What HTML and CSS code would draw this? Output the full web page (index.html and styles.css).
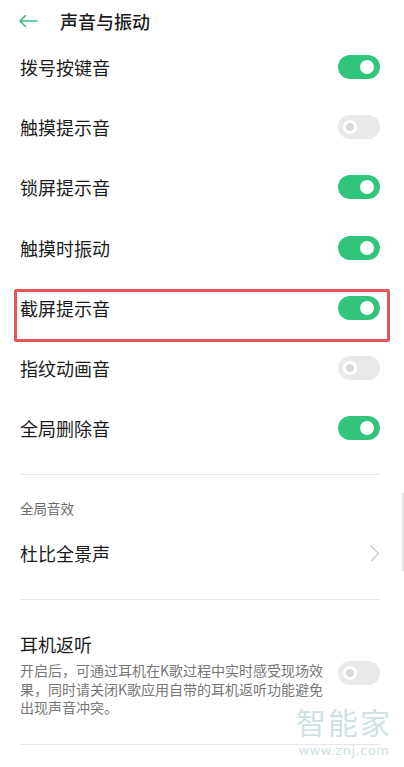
FILE: index.html
```html
<!DOCTYPE html>
<html lang="zh-CN">
<head>
  <meta charset="UTF-8" />
  <meta name="viewport" content="width=device-width, initial-scale=1.0"/>
  <title>声音与振动</title>
  <link rel="stylesheet" href="styles.css">
</head>
<body>
  <div class="page">
    <div class="header">
      <svg class="back" width="20" height="14" viewBox="0 0 20 14">
        <path d="M19 7H2M7.5 1.5L2 7l5.5 5.5" fill="none" stroke="#3dba7a" stroke-width="1.6" stroke-linecap="round" stroke-linejoin="round"/>
      </svg>
      <span class="title">声音与振动</span>
    </div>

    <div class="row"><span>拨号按键音</span><span class="switch on"></span></div>
    <div class="row"><span>触摸提示音</span><span class="switch"></span></div>
    <div class="row"><span>锁屏提示音</span><span class="switch on"></span></div>
    <div class="row"><span>触摸时振动</span><span class="switch on"></span></div>
    <div class="row marked"><span>截屏提示音</span><span class="switch on"></span><div class="mark"></div></div>
    <div class="row"><span>指纹动画音</span><span class="switch"></span></div>
    <div class="row"><span>全局删除音</span><span class="switch on"></span></div>

    <div class="divider first"></div>

    <div class="section-title">全局音效</div>
    <div class="link-row">
      <span>杜比全景声</span>
      <svg width="10" height="17" viewBox="0 0 10 17">
        <path d="M1 1l7.5 7.5L1 16" fill="none" stroke="#c6c6c6" stroke-width="1.3"/>
      </svg>
    </div>

    <div class="divider"></div>

    <div class="block">
      <div class="block-title">耳机返听</div>
      <div class="block-body">
        <div class="desc">
          <span>开启后，可通过耳机在K歌过程中实时感受现场效</span><br>
          <span>果，同时请关闭K歌应用自带的耳机返听功能避免</span><br>
          <span>出现声音冲突。</span>
        </div>
        <span class="switch"></span>
      </div>
    </div>

    <div class="divider"></div>

    <div class="scrollbar"></div>
    <div class="watermark">
      <div class="wm-big">智能家</div>
      <div class="wm-small">www.znj.com</div>
    </div>
  </div>
</body>
</html>
```

FILE: styles.css
```css
body {
  margin: 0;
  background: #fff;
  font-family: "Noto Sans CJK SC", "Noto Sans", sans-serif;
  color: #1c1c1c;
}

.page {
  position: relative;
  width: 404px;
  height: 767px;
  overflow: hidden;
}

.header {
  display: flex;
  align-items: center;
  height: 32px;
  padding-top: 5px;
}

.back {
  margin-left: 18px;
  margin-right: 22px;
}

.title {
  font-size: 18px;
  font-weight: 500;
}

.row {
  position: relative;
  display: flex;
  align-items: center;
  justify-content: space-between;
  height: 60.2px;
  padding: 0 24px 0 20px;
  font-size: 18px;
}

.mark {
  position: absolute;
  left: 14px;
  right: 14px;
  top: 11px;
  height: 47px;
  border: 3px solid #e25656;
  border-radius: 2px;
}

.switch {
  position: relative;
  flex: none;
  width: 42px;
  height: 24px;
  border-radius: 12px;
  background: #e9e9e9;
}

.switch::after {
  content: "";
  position: absolute;
  top: 5px;
  left: 5px;
  width: 8px;
  height: 8px;
  border: 3px solid #fff;
  border-radius: 50%;
  background: #d8d8d8;
}

.switch.on {
  background: #31c47b;
}

.switch.on::after {
  left: 22px;
  top: 5px;
  width: 14px;
  height: 14px;
  border: none;
  background: #fff;
}

.divider {
  height: 1px;
  margin: 0 24px 0 20px;
  background: #e6e6e6;
}

.divider.first {
  margin-top: 16px;
}

.section-title {
  padding: 23px 20px 0;
  font-size: 13.5px;
  line-height: 20px;
  color: #6a6a6a;
}

.link-row {
  display: flex;
  align-items: center;
  justify-content: space-between;
  padding: 23px 24px 34px 20px;
  font-size: 18px;
  line-height: 24px;
}

.block {
  padding: 32px 24px 27px 20px;
}

.block-title {
  font-size: 18px;
  line-height: 24px;
}

.block-body {
  display: flex;
  align-items: flex-start;
  justify-content: space-between;
  margin-top: 5px;
}

.desc {
  width: 308px;
  font-size: 14px;
  line-height: 18.5px;
  color: #777;
  white-space: nowrap;
}

.scrollbar {
  position: absolute;
  right: 0;
  top: 493px;
  width: 2px;
  height: 78px;
  background: #e2e2e2;
}

.watermark {
  position: absolute;
  left: 294px;
  top: 700px;
  width: 100px;
  text-align: center;
  color: #cfe1e4;
}

.wm-big {
  font-size: 30px;
  line-height: 42px;
  letter-spacing: 2px;
}

.wm-small {
  margin-top: 1.5px;
  font-family: "DejaVu Sans", sans-serif;
  font-size: 13px;
  line-height: 14px;
  letter-spacing: 0.5px;
}
```
